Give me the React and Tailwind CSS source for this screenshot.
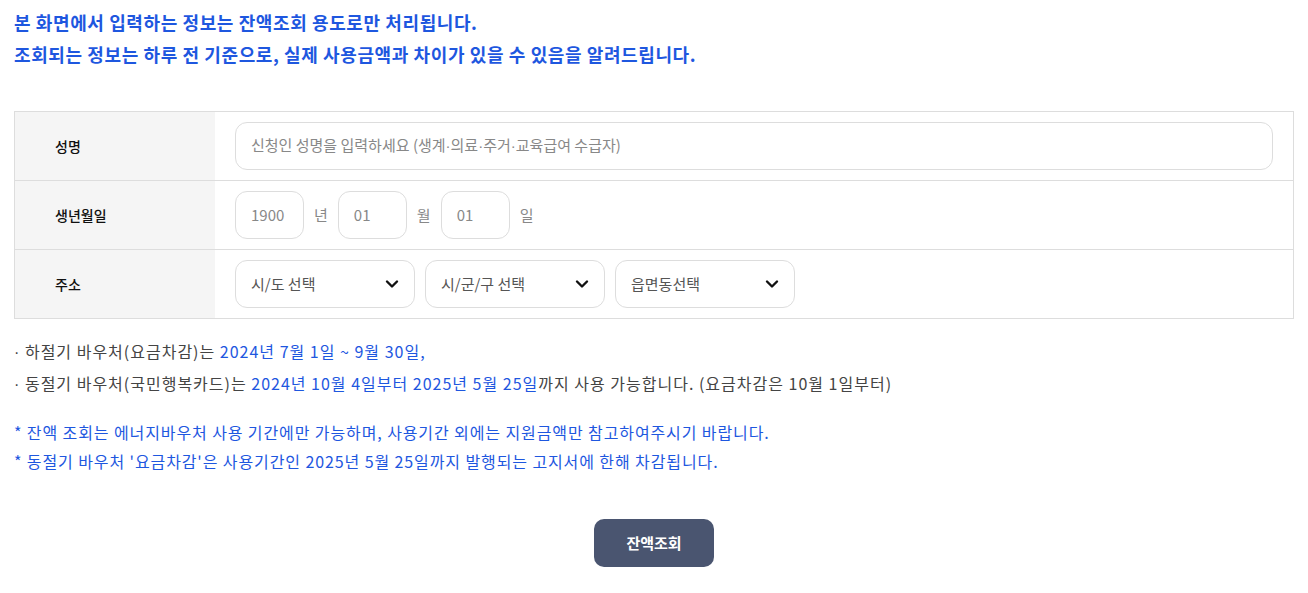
import React from "react";

const font = { fontFamily: '"Noto Sans CJK KR", "Noto Sans", sans-serif' };

function Dot() {
  return <span style={{ fontFamily: '"Liberation Sans", sans-serif' }}>·</span>;
}

function Chevron() {
  return (
    <svg width="16" height="16" viewBox="0 0 16 16" fill="none">
      <path d="M3 5.5l5 5 5-5" stroke="#111" strokeWidth="2.4" strokeLinecap="round" strokeLinejoin="round" />
    </svg>
  );
}

function Row({ label, last, children }) {
  return (
    <div className={last ? "flex h-[68px]" : "flex h-[69px] border-b border-[#dddddd]"}>
      <div className="w-[200px] shrink-0 bg-[#f5f5f5] flex items-center pl-[40px] text-[14px] font-medium text-[#111]">
        {label}
      </div>
      <div className="flex-1 flex items-center pl-[20px] pr-[20px] gap-[10px]">{children}</div>
    </div>
  );
}

function Select({ text }) {
  return (
    <div className="w-[180px] h-[48px] border border-[#dddddd] rounded-[12px] flex items-center justify-between pl-[15px] pr-[14px] text-[15px] text-[#555]">
      <span>{text}</span>
      <Chevron />
    </div>
  );
}

function Small({ text }) {
  return (
    <div className="w-[69px] h-[48px] border border-[#dddddd] rounded-[12px] flex items-center pl-[15px] text-[15px] text-[#888]">
      {text}
    </div>
  );
}

export default function App() {
  return (
    <div style={font} className="bg-white w-[1308px] h-[593px] px-[14px] pt-[6px]">
      <div className="text-[18px] font-bold text-[#1e57df] leading-[32px] tracking-[0.6px]">
        <p>본 화면에서 입력하는 정보는 잔액조회 용도로만 처리됩니다.</p>
        <p>조회되는 정보는 하루 전 기준으로, 실제 사용금액과 차이가 있을 수 있음을 알려드립니다.</p>
      </div>

      <div className="mt-[41px] w-[1280px] border border-[#dddddd]">
        <Row label="성명">
          <div className="flex-1 h-[48px] border border-[#dddddd] rounded-[12px] flex items-center pl-[15px] text-[15px] text-[#888]">
            <span>
              신청인 성명을 입력하세요 (생계<Dot />의료<Dot />주거<Dot />교육급여 수급자)
            </span>
          </div>
        </Row>
        <Row label="생년월일">
          <Small text="1900" />
          <span className="text-[15px] text-[#888]">년</span>
          <Small text="01" />
          <span className="text-[15px] text-[#888]">월</span>
          <Small text="01" />
          <span className="text-[15px] text-[#888]">일</span>
        </Row>
        <Row label="주소" last>
          <Select text="시/도 선택" />
          <Select text="시/군/구 선택" />
          <Select text="읍면동선택" />
        </Row>
      </div>

      <div className="mt-[17px] text-[16px] text-[#444] leading-[30px] tracking-[1px]">
        <p>
          <Dot /> 하절기 바우처(요금차감)는 <span className="text-[#1e57df]">2024년 7월 1일 ~ 9월 30일,</span>
        </p>
        <p>
          <Dot /> 동절기 바우처(국민행복카드)는 <span className="text-[#1e57df]">2024년 10월 4일부터 2025년 5월 25일</span>까지 사용 가능합니다. (요금차감은 10월 1일부터)
        </p>
      </div>

      <div className="mt-[18px] text-[16px] text-[#1e57df] leading-[29px] tracking-[0.9px]">
        <p>* 잔액 조회는 에너지바우처 사용 기간에만 가능하며, 사용기간 외에는 지원금액만 참고하여주시기 바랍니다.</p>
        <p>* 동절기 바우처 '요금차감'은 사용기간인 2025년 5월 25일까지 발행되는 고지서에 한해 차감됩니다.</p>
      </div>

      <div className="flex justify-center mt-[43px] w-[1280px]">
        <button className="w-[120px] h-[48px] rounded-[10px] bg-[#4a5570] text-white text-[15px] font-bold">
          잔액조회
        </button>
      </div>
    </div>
  );
}
